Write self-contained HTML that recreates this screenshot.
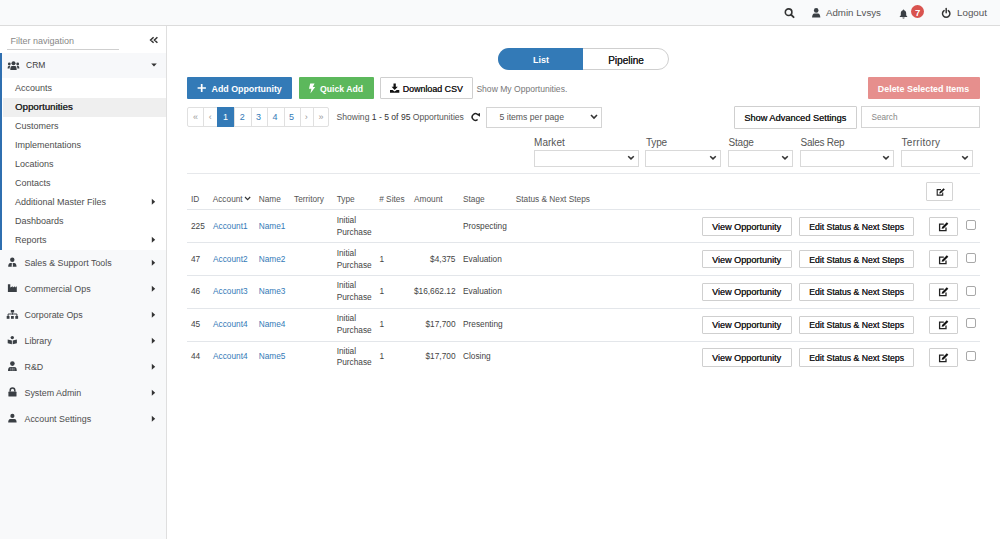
<!DOCTYPE html>
<html><head><meta charset="utf-8">
<style>
*{box-sizing:border-box;margin:0;padding:0}
html,body{width:1000px;height:539px;overflow:hidden;background:#fff;font-family:"Liberation Sans",sans-serif;color:#333;position:relative}
.t{position:absolute;white-space:nowrap;line-height:12px}
svg{display:block}
</style></head><body>
<div style="position:absolute;left:0px;top:0px;width:1000px;height:25px;background:#f9fafb"></div>
<div style="position:absolute;left:0px;top:25px;width:1000px;height:1px;background:#dcdcdc"></div>
<svg style="position:absolute;left:782px;top:6px" width="14" height="14" viewBox="0 0 14 14"><circle cx="6.6" cy="6.2" r="3.3" fill="none" stroke="#333" stroke-width="1.6"/><path d="M9 8.6 L11.6 11.2" stroke="#333" stroke-width="1.9" stroke-linecap="round"/></svg>
<svg style="position:absolute;left:810px;top:6px" width="12" height="13" viewBox="0 0 12 13"><circle cx="6.2" cy="4.4" r="2.3" fill="#3a3f44"/><path d="M2.1 11.6 Q2.1 7.6 4.4 7.4 L8 7.4 Q10.3 7.6 10.3 11.6 Z" fill="#3a3f44"/></svg>
<div class="t" style="left:826px;top:7px;font-size:9.7px;font-weight:400;color:#555;">Admin Lvsys</div>
<svg style="position:absolute;left:897px;top:8px" width="12" height="12" viewBox="0 0 12 12"><path d="M6.5 2.2 C4.5 2.2 3.8 3.8 3.8 5.6 L3.8 7.3 L2.5 8.9 L10.5 8.9 L9.2 7.3 L9.2 5.6 C9.2 3.8 8.5 2.2 6.5 2.2Z" fill="#3a3f44"/><path d="M5.4 9.4 L7.6 9.4 Q7.4 10.6 6.5 10.6 Q5.6 10.6 5.4 9.4Z" fill="#3a3f44"/><circle cx="6.5" cy="2.2" r="0.7" fill="#3a3f44"/></svg>
<div style="position:absolute;left:911px;top:5px;width:13px;height:13px;background:#d9534f;border-radius:50%"></div>
<div class="t" style="left:767.5px;width:300px;text-align:center;top:7px;font-size:9px;font-weight:400;color:#fff;text-shadow:0.2px 0 0 #fff">7</div>
<svg style="position:absolute;left:940px;top:7px" width="12" height="12" viewBox="0 0 12 12"><path d="M4.1 3.6 A3.7 3.7 0 1 0 8.3 3.6" fill="none" stroke="#333" stroke-width="1.5" stroke-linecap="round"/><path d="M6.2 1.6 L6.2 5.8" stroke="#333" stroke-width="1.5" stroke-linecap="round"/></svg>
<div class="t" style="left:957px;top:7px;font-size:9.8px;font-weight:400;color:#555;">Logout</div>
<div style="position:absolute;left:0px;top:26px;width:166px;height:513px;background:#f8f9fa"></div>
<div style="position:absolute;left:166px;top:26px;width:1px;height:513px;background:#dfdfdf"></div>
<div style="position:absolute;left:0px;top:26px;width:166px;height:26.5px;background:#fff"></div>
<div style="position:absolute;left:0px;top:52.5px;width:166px;height:25px;background:#f7f8fa"></div>
<div style="position:absolute;left:0px;top:77.5px;width:166px;height:172px;background:#fff"></div>
<div style="position:absolute;left:0px;top:52.5px;width:2px;height:197px;background:#2f6fb0"></div>
<div style="position:absolute;left:3px;top:98px;width:163px;height:18.5px;background:#efefef"></div>
<div class="t" style="left:10.5px;top:35px;font-size:9px;font-weight:400;color:#888;">Filter navigation</div>
<div style="position:absolute;left:7px;top:49px;width:112px;height:1px;background:#cfcfcf"></div>
<svg style="position:absolute;left:149px;top:36px" width="10" height="9" viewBox="0 0 10 9"><path d="M4.6 1.2 L1.6 4 L4.6 6.8 M8.4 1.2 L5.4 4 L8.4 6.8" fill="none" stroke="#333" stroke-width="1.5"/></svg>
<svg style="position:absolute;left:7.3px;top:60.5px" width="13" height="10" viewBox="0 0 13 10"><circle cx="6.5" cy="2.2" r="2" fill="#3a3f44"/><circle cx="2.3" cy="3" r="1.4" fill="#3a3f44"/><circle cx="10.7" cy="3" r="1.4" fill="#3a3f44"/><path d="M3.3 9 Q3.3 5.2 5 5.1 L8 5.1 Q9.7 5.2 9.7 9Z" fill="#3a3f44"/><path d="M0.6 7.4 Q0.6 5 1.8 5 L3.3 5 Q2.6 6 2.6 7.4Z" fill="#3a3f44"/><path d="M12.4 7.4 Q12.4 5 11.2 5 L9.7 5 Q10.4 6 10.4 7.4Z" fill="#3a3f44"/></svg>
<div class="t" style="left:26px;top:59px;font-size:8.5px;font-weight:400;color:#3d3d3d;">CRM</div>
<svg style="position:absolute;left:150px;top:63px" width="8" height="5" viewBox="0 0 8 5"><path d="M1.2 0.6 L6.8 0.6 L4 3.6Z" fill="#333"/></svg>
<div class="t" style="left:15px;top:82px;font-size:9px;font-weight:400;color:#4d4d4d;">Accounts</div>
<div class="t" style="left:15px;top:101px;font-size:9.6px;font-weight:400;color:#2a2a2a;text-shadow:0.3px 0 0 #2a2a2a;letter-spacing:0.05px">Opportunities</div>
<div class="t" style="left:15px;top:120px;font-size:9px;font-weight:400;color:#4d4d4d;">Customers</div>
<div class="t" style="left:15px;top:139px;font-size:9px;font-weight:400;color:#4d4d4d;">Implementations</div>
<div class="t" style="left:15px;top:158px;font-size:9px;font-weight:400;color:#4d4d4d;">Locations</div>
<div class="t" style="left:15px;top:177px;font-size:9px;font-weight:400;color:#4d4d4d;">Contacts</div>
<div class="t" style="left:15px;top:196px;font-size:9px;font-weight:400;color:#4d4d4d;">Additional Master Files</div>
<svg style="position:absolute;left:151px;top:198.2px" width="5" height="8" viewBox="0 0 5 8"><path d="M0.8 0.8 L4.2 3.8 L0.8 6.8Z" fill="#333"/></svg>
<div class="t" style="left:15px;top:215px;font-size:9px;font-weight:400;color:#4d4d4d;">Dashboards</div>
<div class="t" style="left:15px;top:234px;font-size:9px;font-weight:400;color:#4d4d4d;">Reports</div>
<svg style="position:absolute;left:151px;top:236.4px" width="5" height="8" viewBox="0 0 5 8"><path d="M0.8 0.8 L4.2 3.8 L0.8 6.8Z" fill="#333"/></svg>
<div class="t" style="left:24.5px;top:257px;font-size:8.9px;font-weight:400;color:#4d4d4d;">Sales &amp; Support Tools</div>
<svg style="position:absolute;left:151px;top:259px" width="5" height="8" viewBox="0 0 5 8"><path d="M0.8 0.8 L4.2 3.8 L0.8 6.8Z" fill="#333"/></svg>
<div class="t" style="left:24.5px;top:283px;font-size:8.9px;font-weight:400;color:#4d4d4d;">Commercial Ops</div>
<svg style="position:absolute;left:151px;top:285px" width="5" height="8" viewBox="0 0 5 8"><path d="M0.8 0.8 L4.2 3.8 L0.8 6.8Z" fill="#333"/></svg>
<div class="t" style="left:24.5px;top:309px;font-size:8.9px;font-weight:400;color:#4d4d4d;">Corporate Ops</div>
<svg style="position:absolute;left:151px;top:311px" width="5" height="8" viewBox="0 0 5 8"><path d="M0.8 0.8 L4.2 3.8 L0.8 6.8Z" fill="#333"/></svg>
<div class="t" style="left:24.5px;top:335px;font-size:8.9px;font-weight:400;color:#4d4d4d;">Library</div>
<svg style="position:absolute;left:151px;top:337px" width="5" height="8" viewBox="0 0 5 8"><path d="M0.8 0.8 L4.2 3.8 L0.8 6.8Z" fill="#333"/></svg>
<div class="t" style="left:24.5px;top:361px;font-size:8.9px;font-weight:400;color:#4d4d4d;">R&amp;D</div>
<svg style="position:absolute;left:151px;top:363px" width="5" height="8" viewBox="0 0 5 8"><path d="M0.8 0.8 L4.2 3.8 L0.8 6.8Z" fill="#333"/></svg>
<div class="t" style="left:24.5px;top:387px;font-size:8.9px;font-weight:400;color:#4d4d4d;">System Admin</div>
<svg style="position:absolute;left:151px;top:389px" width="5" height="8" viewBox="0 0 5 8"><path d="M0.8 0.8 L4.2 3.8 L0.8 6.8Z" fill="#333"/></svg>
<div class="t" style="left:24.5px;top:413px;font-size:8.9px;font-weight:400;color:#4d4d4d;">Account Settings</div>
<svg style="position:absolute;left:151px;top:415px" width="5" height="8" viewBox="0 0 5 8"><path d="M0.8 0.8 L4.2 3.8 L0.8 6.8Z" fill="#333"/></svg>
<svg style="position:absolute;left:5px;top:256px" width="14" height="14" viewBox="0 0 14 14"><circle cx="7.3" cy="3.8" r="2.2" fill="#3a3f44"/><path d="M3.2 10.8 Q3.2 7.2 5.4 7 L9.2 7 Q11.5 7.2 11.5 10.8Z" fill="#3a3f44"/><path d="M6.9 7 L7.7 7 L8 10.8 L6.6 10.8Z" fill="#f8f9fa"/></svg>
<svg style="position:absolute;left:5px;top:282px" width="14" height="14" viewBox="0 0 14 14"><path d="M2.9 2.2 L5.3 2.2 L5.3 5.4 L7.8 4.2 L7.8 5.4 L10.1 4.2 L10.1 5.4 L11.8 4.2 L11.8 9.9 L2.9 9.9Z" fill="#3a3f44"/></svg>
<svg style="position:absolute;left:5px;top:307px" width="14" height="14" viewBox="0 0 14 14"><rect x="5.8" y="3" width="3.3" height="2.5" fill="#3a3f44"/><path d="M7.45 5.5 L7.45 7.6 M3.1 9.5 L3.1 7 L11.9 7 L11.9 9.5" fill="none" stroke="#3a3f44" stroke-width="1"/><rect x="1.7" y="9" width="2.8" height="2.8" fill="#3a3f44"/><rect x="6" y="9" width="2.8" height="2.8" fill="#3a3f44"/><rect x="10.3" y="9" width="2.8" height="2.8" fill="#3a3f44"/></svg>
<svg style="position:absolute;left:5px;top:333px" width="14" height="14" viewBox="0 0 14 14"><circle cx="7.3" cy="4.6" r="1.7" fill="#3a3f44"/><path d="M2.7 6.6 L6.9 7.6 L6.9 11.2 L2.7 10.2Z" fill="#3a3f44"/><path d="M11.9 6.6 L7.7 7.6 L7.7 11.2 L11.9 10.2Z" fill="#3a3f44"/></svg>
<svg style="position:absolute;left:5px;top:359px" width="14" height="14" viewBox="0 0 14 14"><circle cx="7.4" cy="4.6" r="2.3" fill="#3a3f44"/><path d="M3 12 Q3 8.2 5.3 8 L9.5 8 Q11.8 8.2 11.8 12Z" fill="#3a3f44"/><path d="M5.8 8.6 L5.8 11.6 M7.4 8.6 L7.4 11.6 M9 8.6 L9 11.6" stroke="#b8bcc0" stroke-width="0.6"/></svg>
<svg style="position:absolute;left:5px;top:385px" width="14" height="14" viewBox="0 0 14 14"><path d="M5.2 6.6 L5.2 5.3 A2.3 2.3 0 0 1 9.8 5.3 L9.8 6.6" fill="none" stroke="#3a3f44" stroke-width="1.5"/><rect x="3.4" y="6.6" width="8.1" height="4.9" rx="0.6" fill="#3a3f44"/></svg>
<svg style="position:absolute;left:5px;top:411px" width="14" height="14" viewBox="0 0 14 14"><circle cx="7.4" cy="4.9" r="2.1" fill="#3a3f44"/><path d="M3.2 11.6 Q3.2 8.2 5.3 8 L9.5 8 Q11.6 8.2 11.6 11.6Z" fill="#3a3f44"/></svg>
<div style="position:absolute;left:498px;top:48px;width:171px;height:22px;border:1px solid #cfcfcf;border-radius:11px;background:#fff"></div>
<div style="position:absolute;left:498px;top:48px;width:85px;height:22px;background:#337ab7;border-radius:11px 0 0 11px"></div>
<div class="t" style="left:391px;width:300px;text-align:center;top:54px;font-size:9px;font-weight:700;color:#fff;">List</div>
<div class="t" style="left:476px;width:300px;text-align:center;top:55px;font-size:10px;font-weight:400;color:#222;text-shadow:0.15px 0 0 #222">Pipeline</div>
<div style="position:absolute;left:187px;top:77px;width:105px;height:22px;background:#337ab7;border-radius:1px"></div>
<svg style="position:absolute;left:197px;top:83px" width="10" height="10" viewBox="0 0 10 10"><path d="M4.7 1 L4.7 9 M0.6 5 L8.9 5" stroke="#fff" stroke-width="1.7"/></svg>
<div class="t" style="left:211.5px;top:83px;font-size:8.85px;font-weight:700;color:#fff;">Add Opportunity</div>
<div style="position:absolute;left:298.5px;top:77px;width:75px;height:22px;background:#5cb85c;border-radius:1px"></div>
<svg style="position:absolute;left:308px;top:83px" width="8" height="11" viewBox="0 0 8 11"><path d="M2.2 0.5 L6.6 0.5 L4.8 4 L7.2 4 L2.4 10.5 L3.4 5.8 L1 5.8Z" fill="#fff"/></svg>
<div class="t" style="left:320px;top:83px;font-size:8.66px;font-weight:700;color:#fff;">Quick Add</div>
<div style="position:absolute;left:380px;top:77px;width:93px;height:22px;background:#fff;border:1px solid #cfcfcf;border-radius:1px"></div>
<svg style="position:absolute;left:389px;top:82px" width="11" height="11" viewBox="0 0 11 11"><path d="M4.5 1.6 L6.8 1.6 L6.8 4.8 L8.8 4.8 L5.65 7.9 L2.6 4.8 L4.5 4.8Z" fill="#111"/><path d="M1 8 L3.6 8 L5.65 9.6 L7.7 8 L10.3 8 L10.3 10.7 L1 10.7Z" fill="#111"/></svg>
<div class="t" style="left:402.7px;top:83px;font-size:8.89px;font-weight:400;color:#222;text-shadow:0.15px 0 0 #222">Download CSV</div>
<div class="t" style="left:476.4px;top:83px;font-size:8.57px;font-weight:400;color:#777;">Show My Opportunities.</div>
<div style="position:absolute;left:867.5px;top:77px;width:112px;height:22px;background:#e68f8d;border-radius:1px"></div>
<div class="t" style="left:773.5px;width:300px;text-align:center;top:83px;font-size:8.9px;font-weight:700;color:#fff;">Delete Selected Items</div>
<div style="position:absolute;left:187px;top:107px;width:142.3px;height:19.5px;border:1px solid #e0e0e0;border-radius:2px;background:#fff"></div>
<div class="t" style="left:45.44999999999999px;width:300px;text-align:center;top:111px;font-size:9px;font-weight:400;color:#999;">&laquo;</div>
<div style="position:absolute;left:203.4px;top:107px;width:1px;height:19.5px;background:#e0e0e0"></div>
<div class="t" style="left:60.30000000000001px;width:300px;text-align:center;top:111px;font-size:9px;font-weight:400;color:#999;">&lsaquo;</div>
<div style="position:absolute;left:217.2px;top:107px;width:1px;height:19.5px;background:#e0e0e0"></div>
<div style="position:absolute;left:217.2px;top:107px;width:16.80000000000001px;height:19.5px;background:#337ab7"></div>
<div class="t" style="left:75.6px;width:300px;text-align:center;top:111px;font-size:9px;font-weight:400;color:#fff;">1</div>
<div style="position:absolute;left:234px;top:107px;width:1px;height:19.5px;background:#e0e0e0"></div>
<div class="t" style="left:92.25px;width:300px;text-align:center;top:111px;font-size:9px;font-weight:400;color:#337ab7;">2</div>
<div style="position:absolute;left:250.5px;top:107px;width:1px;height:19.5px;background:#e0e0e0"></div>
<div class="t" style="left:108.5px;width:300px;text-align:center;top:111px;font-size:9px;font-weight:400;color:#337ab7;">3</div>
<div style="position:absolute;left:266.5px;top:107px;width:1px;height:19.5px;background:#e0e0e0"></div>
<div class="t" style="left:125.0px;width:300px;text-align:center;top:111px;font-size:9px;font-weight:400;color:#337ab7;">4</div>
<div style="position:absolute;left:283.5px;top:107px;width:1px;height:19.5px;background:#e0e0e0"></div>
<div class="t" style="left:141.5px;width:300px;text-align:center;top:111px;font-size:9px;font-weight:400;color:#337ab7;">5</div>
<div style="position:absolute;left:299.5px;top:107px;width:1px;height:19.5px;background:#e0e0e0"></div>
<div class="t" style="left:156.25px;width:300px;text-align:center;top:111px;font-size:9px;font-weight:400;color:#999;">&rsaquo;</div>
<div style="position:absolute;left:313px;top:107px;width:1px;height:19.5px;background:#e0e0e0"></div>
<div class="t" style="left:171.0px;width:300px;text-align:center;top:111px;font-size:9px;font-weight:400;color:#999;">&raquo;</div>
<div class="t" style="left:336.5px;top:111px;font-size:8.59px;font-weight:400;color:#555;">Showing <span style="color:#333">1 - 5 of 95</span> Opportunities</div>
<svg style="position:absolute;left:469.7px;top:111px" width="12" height="12" viewBox="0 0 12 12"><path d="M8.03 3.88 A3.3 3.3 0 1 0 7.62 8.53" fill="none" stroke="#222" stroke-width="1.5"/><path d="M6.4 3.6 L10 2 L10 5.7Z" fill="#222"/></svg>
<div style="position:absolute;left:486px;top:106.5px;width:115.5px;height:21px;border:1px solid #d4d4d4;background:#fff"></div>
<div class="t" style="left:499.5px;top:111px;font-size:8.66px;font-weight:400;color:#555;">5 items per page</div>
<svg style="position:absolute;left:590px;top:114px" width="8" height="6" viewBox="0 0 8 6"><path d="M1 1 L4 4 L7 1" fill="none" stroke="#333" stroke-width="1.6"/></svg>
<div style="position:absolute;left:733.5px;top:106px;width:123.5px;height:22.5px;border:1px solid #cfcfcf;border-radius:1px;background:#fff"></div>
<div class="t" style="left:645.25px;width:300px;text-align:center;top:112px;font-size:9.22px;font-weight:400;color:#222;text-shadow:0.15px 0 0 #222">Show Advanced Settings</div>
<div style="position:absolute;left:861px;top:106px;width:118.5px;height:21.5px;border:1px solid #d4d4d4;background:#fff"></div>
<div class="t" style="left:871.5px;top:112px;font-size:8.21px;font-weight:400;color:#888;">Search</div>
<div class="t" style="left:534.0px;top:137px;font-size:10px;font-weight:400;color:#555;letter-spacing:0.05px">Market</div>
<div style="position:absolute;left:533.5px;top:149.5px;width:105.10000000000002px;height:17px;border:1px solid #d9d9d9;background:#fff"></div>
<svg style="position:absolute;left:626.6px;top:155px" width="8" height="6" viewBox="0 0 8 6"><path d="M1.2 1.2 L4 3.9 L6.8 1.2" fill="none" stroke="#333" stroke-width="1.5"/></svg>
<div class="t" style="left:645.9px;top:137px;font-size:10px;font-weight:400;color:#555;letter-spacing:-0.15px">Type</div>
<div style="position:absolute;left:645.4px;top:149.5px;width:75.60000000000002px;height:17px;border:1px solid #d9d9d9;background:#fff"></div>
<svg style="position:absolute;left:709px;top:155px" width="8" height="6" viewBox="0 0 8 6"><path d="M1.2 1.2 L4 3.9 L6.8 1.2" fill="none" stroke="#333" stroke-width="1.5"/></svg>
<div class="t" style="left:728.5px;top:137px;font-size:10px;font-weight:400;color:#555;letter-spacing:-0.2px">Stage</div>
<div style="position:absolute;left:728px;top:149.5px;width:64.60000000000002px;height:17px;border:1px solid #d9d9d9;background:#fff"></div>
<svg style="position:absolute;left:780.6px;top:155px" width="8" height="6" viewBox="0 0 8 6"><path d="M1.2 1.2 L4 3.9 L6.8 1.2" fill="none" stroke="#333" stroke-width="1.5"/></svg>
<div class="t" style="left:800.5px;top:137px;font-size:10px;font-weight:400;color:#555;letter-spacing:-0.25px">Sales Rep</div>
<div style="position:absolute;left:800px;top:149.5px;width:94px;height:17px;border:1px solid #d9d9d9;background:#fff"></div>
<svg style="position:absolute;left:882px;top:155px" width="8" height="6" viewBox="0 0 8 6"><path d="M1.2 1.2 L4 3.9 L6.8 1.2" fill="none" stroke="#333" stroke-width="1.5"/></svg>
<div class="t" style="left:901.5px;top:137px;font-size:10px;font-weight:400;color:#555;letter-spacing:0.3px">Territory</div>
<div style="position:absolute;left:901px;top:149.5px;width:71.5px;height:17px;border:1px solid #d9d9d9;background:#fff"></div>
<svg style="position:absolute;left:960.5px;top:155px" width="8" height="6" viewBox="0 0 8 6"><path d="M1.2 1.2 L4 3.9 L6.8 1.2" fill="none" stroke="#333" stroke-width="1.5"/></svg>
<div style="position:absolute;left:187px;top:173px;width:792.5px;height:1px;background:#e6e8eb"></div>
<div class="t" style="left:191px;top:193px;font-size:8.3px;font-weight:400;color:#555;">ID</div>
<div class="t" style="left:212.7px;top:193px;font-size:8.3px;font-weight:400;color:#555;">Account</div>
<div class="t" style="left:258.7px;top:193px;font-size:8.3px;font-weight:400;color:#555;">Name</div>
<div class="t" style="left:294px;top:193px;font-size:8.3px;font-weight:400;color:#555;">Territory</div>
<div class="t" style="left:336.7px;top:193px;font-size:8.3px;font-weight:400;color:#555;">Type</div>
<div class="t" style="left:379.2px;top:193px;font-size:8.3px;font-weight:400;color:#555;"># Sites</div>
<div class="t" style="left:414px;top:193px;font-size:8.3px;font-weight:400;color:#555;">Amount</div>
<div class="t" style="left:463px;top:193px;font-size:8.3px;font-weight:400;color:#555;">Stage</div>
<div class="t" style="left:515.7px;top:193px;font-size:8.3px;font-weight:400;color:#555;">Status &amp; Next Steps</div>
<svg style="position:absolute;left:244px;top:196px" width="8" height="6" viewBox="0 0 8 6"><path d="M1 1 L3.6 3.6 L6.2 1" fill="none" stroke="#333" stroke-width="1.2"/></svg>
<div style="position:absolute;left:926.3px;top:182.3px;width:27.2px;height:18.3px;border:1px solid #d4d4d4;border-radius:1px;background:#fff"></div>
<svg style="position:absolute;left:935.5px;top:188px" width="9" height="9" viewBox="0 0 9 9"><path d="M5 1.6 L1.2 1.6 L1.2 7.1 L6.7 7.1 L6.7 4.6" fill="none" stroke="#222" stroke-width="1.1"/><path d="M3.2 5.6 L3.6 4 L7.6 0.2 L8.8 1.4 L4.8 5.2Z" fill="#111"/></svg>
<div style="position:absolute;left:187px;top:209.3px;width:792.5px;height:1px;background:#e3e6ea"></div>
<div class="t" style="left:191px;top:220px;font-size:8.3px;font-weight:400;color:#444;">225</div>
<div class="t" style="left:213px;top:220px;font-size:8.3px;font-weight:400;color:#337ab7;">Account1</div>
<div class="t" style="left:258.7px;top:220px;font-size:8.3px;font-weight:400;color:#337ab7;">Name1</div>
<div class="t" style="left:336.7px;top:214px;font-size:8.3px;font-weight:400;color:#444;">Initial</div>
<div class="t" style="left:336.7px;top:226px;font-size:8.3px;font-weight:400;color:#444;">Purchase</div>
<div class="t" style="left:463px;top:220px;font-size:8.3px;font-weight:400;color:#444;">Prospecting</div>
<div style="position:absolute;left:701.5px;top:217.4px;width:90.3px;height:18.3px;border:1px solid #cfcfcf;border-radius:1px;background:#fff"></div>
<div class="t" style="left:596.6px;width:300px;text-align:center;top:221px;font-size:9.1px;font-weight:400;color:#222;text-shadow:0.1px 0 0 #222">View Opportunity</div>
<div style="position:absolute;left:799.4px;top:217.4px;width:114.3px;height:18.3px;border:1px solid #cfcfcf;border-radius:1px;background:#fff"></div>
<div class="t" style="left:706.6px;width:300px;text-align:center;top:221px;font-size:8.66px;font-weight:400;color:#222;text-shadow:0.1px 0 0 #222">Edit Status &amp; Next Steps</div>
<div style="position:absolute;left:929.3px;top:217.4px;width:28.3px;height:18.2px;border:1px solid #cfcfcf;border-radius:1px;background:#fff"></div>
<svg style="position:absolute;left:937.5px;top:221.9px" width="11" height="10" viewBox="0 0 11 10"><path d="M5.8 2.2 L1.6 2.2 L1.6 8.6 L8 8.6 L8 5.6" fill="none" stroke="#222" stroke-width="1.3"/><path d="M3.6 6.8 L4.1 4.9 L8.8 0.3 L10.3 1.8 L5.6 6.4Z" fill="#111"/></svg>
<div style="position:absolute;left:966px;top:220.1px;width:10px;height:10px;border:1px solid #a8a8a8;border-radius:2px;background:#fff"></div>
<div style="position:absolute;left:187px;top:242.28px;width:792.5px;height:1px;background:#e3e6ea"></div>
<div class="t" style="left:191px;top:253px;font-size:8.3px;font-weight:400;color:#444;">47</div>
<div class="t" style="left:213px;top:253px;font-size:8.3px;font-weight:400;color:#337ab7;">Account2</div>
<div class="t" style="left:258.7px;top:253px;font-size:8.3px;font-weight:400;color:#337ab7;">Name2</div>
<div class="t" style="left:336.7px;top:247px;font-size:8.3px;font-weight:400;color:#444;">Initial</div>
<div class="t" style="left:336.7px;top:259px;font-size:8.3px;font-weight:400;color:#444;">Purchase</div>
<div class="t" style="left:379.5px;top:253px;font-size:8.3px;font-weight:400;color:#444;">1</div>
<div class="t" style="left:155.5px;width:300px;text-align:right;top:253px;font-size:8.3px;font-weight:400;color:#444;">$4,375</div>
<div class="t" style="left:463px;top:253px;font-size:8.3px;font-weight:400;color:#444;">Evaluation</div>
<div style="position:absolute;left:701.5px;top:250.15px;width:90.3px;height:18.3px;border:1px solid #cfcfcf;border-radius:1px;background:#fff"></div>
<div class="t" style="left:596.6px;width:300px;text-align:center;top:254px;font-size:9.1px;font-weight:400;color:#222;text-shadow:0.1px 0 0 #222">View Opportunity</div>
<div style="position:absolute;left:799.4px;top:250.15px;width:114.3px;height:18.3px;border:1px solid #cfcfcf;border-radius:1px;background:#fff"></div>
<div class="t" style="left:706.6px;width:300px;text-align:center;top:254px;font-size:8.66px;font-weight:400;color:#222;text-shadow:0.1px 0 0 #222">Edit Status &amp; Next Steps</div>
<div style="position:absolute;left:929.3px;top:250.15px;width:28.3px;height:18.2px;border:1px solid #cfcfcf;border-radius:1px;background:#fff"></div>
<svg style="position:absolute;left:937.5px;top:254.65px" width="11" height="10" viewBox="0 0 11 10"><path d="M5.8 2.2 L1.6 2.2 L1.6 8.6 L8 8.6 L8 5.6" fill="none" stroke="#222" stroke-width="1.3"/><path d="M3.6 6.8 L4.1 4.9 L8.8 0.3 L10.3 1.8 L5.6 6.4Z" fill="#111"/></svg>
<div style="position:absolute;left:966px;top:252.85px;width:10px;height:10px;border:1px solid #a8a8a8;border-radius:2px;background:#fff"></div>
<div style="position:absolute;left:187px;top:275.26px;width:792.5px;height:1px;background:#e3e6ea"></div>
<div class="t" style="left:191px;top:285px;font-size:8.3px;font-weight:400;color:#444;">46</div>
<div class="t" style="left:213px;top:285px;font-size:8.3px;font-weight:400;color:#337ab7;">Account3</div>
<div class="t" style="left:258.7px;top:285px;font-size:8.3px;font-weight:400;color:#337ab7;">Name3</div>
<div class="t" style="left:336.7px;top:279px;font-size:8.3px;font-weight:400;color:#444;">Initial</div>
<div class="t" style="left:336.7px;top:291px;font-size:8.3px;font-weight:400;color:#444;">Purchase</div>
<div class="t" style="left:379.5px;top:285px;font-size:8.3px;font-weight:400;color:#444;">1</div>
<div class="t" style="left:155.5px;width:300px;text-align:right;top:285px;font-size:8.3px;font-weight:400;color:#444;">$16,662.12</div>
<div class="t" style="left:463px;top:285px;font-size:8.3px;font-weight:400;color:#444;">Evaluation</div>
<div style="position:absolute;left:701.5px;top:282.9px;width:90.3px;height:18.3px;border:1px solid #cfcfcf;border-radius:1px;background:#fff"></div>
<div class="t" style="left:596.6px;width:300px;text-align:center;top:286px;font-size:9.1px;font-weight:400;color:#222;text-shadow:0.1px 0 0 #222">View Opportunity</div>
<div style="position:absolute;left:799.4px;top:282.9px;width:114.3px;height:18.3px;border:1px solid #cfcfcf;border-radius:1px;background:#fff"></div>
<div class="t" style="left:706.6px;width:300px;text-align:center;top:286px;font-size:8.66px;font-weight:400;color:#222;text-shadow:0.1px 0 0 #222">Edit Status &amp; Next Steps</div>
<div style="position:absolute;left:929.3px;top:282.9px;width:28.3px;height:18.2px;border:1px solid #cfcfcf;border-radius:1px;background:#fff"></div>
<svg style="position:absolute;left:937.5px;top:287.4px" width="11" height="10" viewBox="0 0 11 10"><path d="M5.8 2.2 L1.6 2.2 L1.6 8.6 L8 8.6 L8 5.6" fill="none" stroke="#222" stroke-width="1.3"/><path d="M3.6 6.8 L4.1 4.9 L8.8 0.3 L10.3 1.8 L5.6 6.4Z" fill="#111"/></svg>
<div style="position:absolute;left:966px;top:285.6px;width:10px;height:10px;border:1px solid #a8a8a8;border-radius:2px;background:#fff"></div>
<div style="position:absolute;left:187px;top:308.24px;width:792.5px;height:1px;background:#e3e6ea"></div>
<div class="t" style="left:191px;top:318px;font-size:8.3px;font-weight:400;color:#444;">45</div>
<div class="t" style="left:213px;top:318px;font-size:8.3px;font-weight:400;color:#337ab7;">Account4</div>
<div class="t" style="left:258.7px;top:318px;font-size:8.3px;font-weight:400;color:#337ab7;">Name4</div>
<div class="t" style="left:336.7px;top:312px;font-size:8.3px;font-weight:400;color:#444;">Initial</div>
<div class="t" style="left:336.7px;top:324px;font-size:8.3px;font-weight:400;color:#444;">Purchase</div>
<div class="t" style="left:379.5px;top:318px;font-size:8.3px;font-weight:400;color:#444;">1</div>
<div class="t" style="left:155.5px;width:300px;text-align:right;top:318px;font-size:8.3px;font-weight:400;color:#444;">$17,700</div>
<div class="t" style="left:463px;top:318px;font-size:8.3px;font-weight:400;color:#444;">Presenting</div>
<div style="position:absolute;left:701.5px;top:315.65px;width:90.3px;height:18.3px;border:1px solid #cfcfcf;border-radius:1px;background:#fff"></div>
<div class="t" style="left:596.6px;width:300px;text-align:center;top:319px;font-size:9.1px;font-weight:400;color:#222;text-shadow:0.1px 0 0 #222">View Opportunity</div>
<div style="position:absolute;left:799.4px;top:315.65px;width:114.3px;height:18.3px;border:1px solid #cfcfcf;border-radius:1px;background:#fff"></div>
<div class="t" style="left:706.6px;width:300px;text-align:center;top:319px;font-size:8.66px;font-weight:400;color:#222;text-shadow:0.1px 0 0 #222">Edit Status &amp; Next Steps</div>
<div style="position:absolute;left:929.3px;top:315.65px;width:28.3px;height:18.2px;border:1px solid #cfcfcf;border-radius:1px;background:#fff"></div>
<svg style="position:absolute;left:937.5px;top:320.15px" width="11" height="10" viewBox="0 0 11 10"><path d="M5.8 2.2 L1.6 2.2 L1.6 8.6 L8 8.6 L8 5.6" fill="none" stroke="#222" stroke-width="1.3"/><path d="M3.6 6.8 L4.1 4.9 L8.8 0.3 L10.3 1.8 L5.6 6.4Z" fill="#111"/></svg>
<div style="position:absolute;left:966px;top:318.35px;width:10px;height:10px;border:1px solid #a8a8a8;border-radius:2px;background:#fff"></div>
<div style="position:absolute;left:187px;top:341.22px;width:792.5px;height:1px;background:#e3e6ea"></div>
<div class="t" style="left:191px;top:350px;font-size:8.3px;font-weight:400;color:#444;">44</div>
<div class="t" style="left:213px;top:350px;font-size:8.3px;font-weight:400;color:#337ab7;">Account4</div>
<div class="t" style="left:258.7px;top:350px;font-size:8.3px;font-weight:400;color:#337ab7;">Name5</div>
<div class="t" style="left:336.7px;top:345px;font-size:8.3px;font-weight:400;color:#444;">Initial</div>
<div class="t" style="left:336.7px;top:356px;font-size:8.3px;font-weight:400;color:#444;">Purchase</div>
<div class="t" style="left:379.5px;top:350px;font-size:8.3px;font-weight:400;color:#444;">1</div>
<div class="t" style="left:155.5px;width:300px;text-align:right;top:350px;font-size:8.3px;font-weight:400;color:#444;">$17,700</div>
<div class="t" style="left:463px;top:350px;font-size:8.3px;font-weight:400;color:#444;">Closing</div>
<div style="position:absolute;left:701.5px;top:348.4px;width:90.3px;height:18.3px;border:1px solid #cfcfcf;border-radius:1px;background:#fff"></div>
<div class="t" style="left:596.6px;width:300px;text-align:center;top:352px;font-size:9.1px;font-weight:400;color:#222;text-shadow:0.1px 0 0 #222">View Opportunity</div>
<div style="position:absolute;left:799.4px;top:348.4px;width:114.3px;height:18.3px;border:1px solid #cfcfcf;border-radius:1px;background:#fff"></div>
<div class="t" style="left:706.6px;width:300px;text-align:center;top:352px;font-size:8.66px;font-weight:400;color:#222;text-shadow:0.1px 0 0 #222">Edit Status &amp; Next Steps</div>
<div style="position:absolute;left:929.3px;top:348.4px;width:28.3px;height:18.2px;border:1px solid #cfcfcf;border-radius:1px;background:#fff"></div>
<svg style="position:absolute;left:937.5px;top:352.9px" width="11" height="10" viewBox="0 0 11 10"><path d="M5.8 2.2 L1.6 2.2 L1.6 8.6 L8 8.6 L8 5.6" fill="none" stroke="#222" stroke-width="1.3"/><path d="M3.6 6.8 L4.1 4.9 L8.8 0.3 L10.3 1.8 L5.6 6.4Z" fill="#111"/></svg>
<div style="position:absolute;left:966px;top:351.1px;width:10px;height:10px;border:1px solid #a8a8a8;border-radius:2px;background:#fff"></div>
</body></html>
